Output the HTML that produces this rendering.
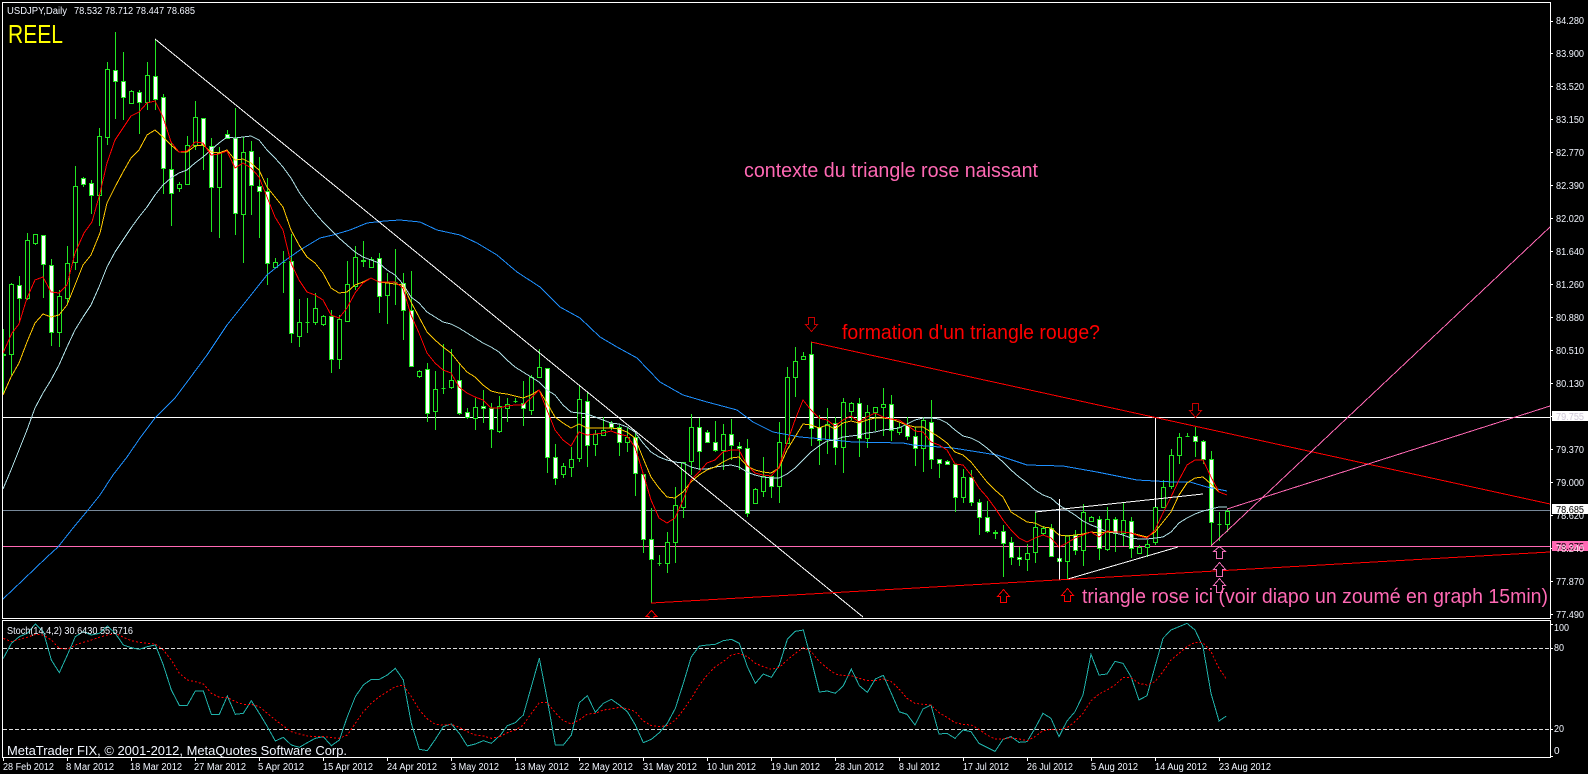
<!DOCTYPE html>
<html lang="fr">
<head>
<meta charset="utf-8">
<title>USDJPY,Daily</title>
<style>
html,body{margin:0;padding:0;background:#000;width:1588px;height:774px;overflow:hidden}
svg{display:block;position:absolute;left:0;top:0}
text{font-family:"Liberation Sans",sans-serif;fill:#f2f6ff;font-size:10px}
.big{font-size:20px}
</style>
</head>
<body>
<svg width="1588" height="774" viewBox="0 0 1588 774" xmlns="http://www.w3.org/2000/svg">
<defs>
<clipPath id="m"><rect x="3" y="3" width="1547" height="615"/></clipPath>
<clipPath id="s"><rect x="3" y="621" width="1547" height="136"/></clipPath>
</defs>
<rect width="1588" height="774" fill="#000"/>

<g shape-rendering="crispEdges" fill="none" stroke-width="1">
<!-- frame -->
<path stroke="#fff" d="M2.5 2.5H1550.5V618.5H2.5ZM2.5 620.5H1550.5V757.5H2.5Z"/>
<!-- axis ticks -->
<path stroke="#fff" d="M1551 21.5h2M1551 53.5h2M1551 86.5h2M1551 119.5h2M1551 152.5h2M1551 185.5h2M1551 218.5h2M1551 251.5h2M1551 284.5h2M1551 317.5h2M1551 350.5h2M1551 383.5h2M1551 416.5h2M1551 449.5h2M1551 482.5h2M1551 515.5h2M1551 548.5h2M1551 581.5h2M1551 614.5h2M1551 624.5h2M1551 648.5h2M1551 729.5h2M1551 756.5h2"/>
<path stroke="#fff" d="M3.5 757V761M67.5 757V761M131.5 757V761M195.5 757V761M259.5 757V761M323.5 757V761M387.5 757V761M451.5 757V761M515.5 757V761M579.5 757V761M643.5 757V761M707.5 757V761M771.5 757V761M835.5 757V761M899.5 757V761M963.5 757V761M1027.5 757V761M1091.5 757V761M1155.5 757V761M1219.5 757V761"/>

<g clip-path="url(#m)">
<!-- horizontal lines -->
<path stroke="#fff" d="M3 417.5H1552"/>
<path stroke="#778899" d="M3 510.5H1552"/>
<path stroke="#ff69b4" d="M3 546.5H1552"/>

<!-- wicks -->
<path stroke="#22e622" d="M3.5 329V393M11.5 283V375M19.5 276V323M27.5 233V300M35.5 234V245M43.5 235V298M51.5 259V346M59.5 290V347M67.5 246V303M75.5 166V270M83.5 177V187M91.5 180V214M99.5 128V226M107.5 62V145M115.5 32V119M123.5 52V120M131.5 90V103M139.5 90V134M147.5 62V110M155.5 39V110M163.5 94V194M171.5 143V226M179.5 182V192M187.5 136V184M195.5 101V150M203.5 118V170M211.5 138V232M219.5 147V238M227.5 130V138M235.5 108V235M243.5 137V263M251.5 141V215M259.5 157V238M267.5 178V285M275.5 258V268M283.5 251V293M291.5 234V343M299.5 299V347M307.5 298V333M315.5 293V325M323.5 315V326M331.5 310V373M339.5 315V369M347.5 261V321M355.5 246V290M363.5 241V267M371.5 257V268M379.5 253V313M387.5 273V324M395.5 249V305M403.5 273V340M411.5 271V367M419.5 370V378M427.5 363V422M435.5 371V430M443.5 344V394M451.5 349V389M459.5 363V415M467.5 408V419M475.5 398V430M483.5 390V423M491.5 403V448M499.5 396V433M507.5 398V422M515.5 398V403M523.5 381V426M531.5 375V415M539.5 349V378M547.5 368V473M555.5 444V485M563.5 463V478M571.5 447V477M579.5 386V462M587.5 392V467M595.5 430V456M603.5 417V435M611.5 421V430M619.5 425V456M627.5 428V452M635.5 433V496M643.5 474V553M651.5 508V603M659.5 555V566M667.5 532V573M675.5 487V563M683.5 462V518M691.5 414V475M699.5 418V470M707.5 430V443M715.5 421V452M723.5 424V470M731.5 419V460M739.5 442V470M747.5 439V517M755.5 488V503M763.5 457V497M771.5 476V498M779.5 422V503M787.5 367V443M795.5 347V397M803.5 352V360M811.5 342V446M819.5 415V465M827.5 408V454M835.5 417V465M843.5 398V473M851.5 402V420M859.5 398V457M867.5 405V448M875.5 407V431M883.5 388V436M891.5 395V441M899.5 423V435M907.5 417V440M915.5 427V466M923.5 417V472M931.5 400V469M939.5 459V478M947.5 460V465M955.5 464V512M963.5 469V503M971.5 470V506M979.5 499V535M987.5 501V533M995.5 530V539M1003.5 525V577M1011.5 537V565M1019.5 547V566M1027.5 544V571M1035.5 512V563M1043.5 526V535M1051.5 524V557M1059.5 553V561M1067.5 535V579M1075.5 530V555M1083.5 504V566M1091.5 516V522M1099.5 516V560M1107.5 507V551M1115.5 517V552M1123.5 502V546M1131.5 517V558M1139.5 545V554M1147.5 540V557M1155.5 505V545M1163.5 480V508M1171.5 449V489M1179.5 433V464M1187.5 433V437M1195.5 427V457M1203.5 440V464M1211.5 451V546M1219.5 512V541M1227.5 509V532"/>

<!-- black bodies -->
<path stroke="#22e622" fill="#000" d="M9.5 284.5h4V354.5h-4zM25.5 240.5h4V298.5h-4zM33.5 234.5h4V243.5h-4zM57.5 296.5h4V332.5h-4zM65.5 263.5h4V298.5h-4zM73.5 186.5h4V262.5h-4zM97.5 136.5h4V195.5h-4zM105.5 69.5h4V137.5h-4zM129.5 91.5h4V103.5h-4zM145.5 75.5h4V102.5h-4zM177.5 184.5h4V188.5h-4zM185.5 145.5h4V184.5h-4zM193.5 117.5h4V145.5h-4zM217.5 152.5h4V187.5h-4zM241.5 152.5h4V214.5h-4zM273.5 262.5h4V267.5h-4zM281.5 262.5h4V262.5h-4zM297.5 322.5h4V336.5h-4zM305.5 322.5h4V322.5h-4zM313.5 308.5h4V322.5h-4zM321.5 316.5h4V324.5h-4zM337.5 319.5h4V359.5h-4zM345.5 284.5h4V321.5h-4zM353.5 257.5h4V286.5h-4zM369.5 259.5h4V267.5h-4zM385.5 282.5h4V295.5h-4zM393.5 282.5h4V282.5h-4zM417.5 371.5h4V376.5h-4zM433.5 389.5h4V411.5h-4zM441.5 388.5h4V388.5h-4zM449.5 380.5h4V387.5h-4zM473.5 407.5h4V418.5h-4zM497.5 406.5h4V431.5h-4zM505.5 404.5h4V408.5h-4zM513.5 401.5h4V401.5h-4zM529.5 377.5h4V410.5h-4zM537.5 367.5h4V377.5h-4zM561.5 466.5h4V474.5h-4zM569.5 459.5h4V467.5h-4zM577.5 399.5h4V458.5h-4zM593.5 434.5h4V444.5h-4zM601.5 430.5h4V435.5h-4zM625.5 437.5h4V442.5h-4zM657.5 563.5h4V563.5h-4zM665.5 542.5h4V563.5h-4zM673.5 505.5h4V542.5h-4zM681.5 462.5h4V507.5h-4zM689.5 427.5h4V461.5h-4zM721.5 434.5h4V450.5h-4zM753.5 489.5h4V503.5h-4zM761.5 476.5h4V491.5h-4zM777.5 442.5h4V486.5h-4zM785.5 377.5h4V443.5h-4zM793.5 361.5h4V377.5h-4zM801.5 356.5h4V359.5h-4zM825.5 424.5h4V439.5h-4zM841.5 402.5h4V447.5h-4zM849.5 403.5h4V411.5h-4zM865.5 412.5h4V438.5h-4zM873.5 407.5h4V412.5h-4zM881.5 404.5h4V407.5h-4zM897.5 427.5h4V432.5h-4zM921.5 420.5h4V448.5h-4zM961.5 477.5h4V497.5h-4zM993.5 532.5h4V533.5h-4zM1025.5 553.5h4V559.5h-4zM1033.5 527.5h4V552.5h-4zM1041.5 528.5h4V533.5h-4zM1065.5 535.5h4V561.5h-4zM1081.5 512.5h4V550.5h-4zM1089.5 517.5h4V521.5h-4zM1105.5 519.5h4V549.5h-4zM1121.5 520.5h4V533.5h-4zM1137.5 547.5h4V553.5h-4zM1145.5 544.5h4V547.5h-4zM1153.5 507.5h4V542.5h-4zM1161.5 487.5h4V507.5h-4zM1169.5 455.5h4V486.5h-4zM1177.5 437.5h4V455.5h-4zM1185.5 436.5h4V436.5h-4zM1217.5 524.5h4V524.5h-4zM1225.5 511.5h4V524.5h-4z"/>

<!-- white bodies -->
<path stroke="#22e622" fill="#fff" d="M1.5 354.5h4V355.5h-4zM17.5 285.5h4V298.5h-4zM41.5 235.5h4V264.5h-4zM49.5 265.5h4V332.5h-4zM81.5 178.5h4V184.5h-4zM89.5 183.5h4V195.5h-4zM113.5 70.5h4V81.5h-4zM121.5 81.5h4V97.5h-4zM137.5 92.5h4V102.5h-4zM153.5 76.5h4V99.5h-4zM161.5 97.5h4V168.5h-4zM169.5 169.5h4V193.5h-4zM201.5 118.5h4V145.5h-4zM209.5 146.5h4V187.5h-4zM225.5 134.5h4V138.5h-4zM233.5 138.5h4V213.5h-4zM249.5 151.5h4V185.5h-4zM257.5 186.5h4V191.5h-4zM265.5 191.5h4V263.5h-4zM289.5 261.5h4V333.5h-4zM329.5 316.5h4V359.5h-4zM361.5 260.5h4V261.5h-4zM377.5 258.5h4V296.5h-4zM401.5 283.5h4V310.5h-4zM409.5 310.5h4V366.5h-4zM425.5 369.5h4V413.5h-4zM457.5 380.5h4V413.5h-4zM465.5 412.5h4V417.5h-4zM481.5 406.5h4V408.5h-4zM489.5 408.5h4V429.5h-4zM521.5 403.5h4V408.5h-4zM545.5 368.5h4V457.5h-4zM553.5 457.5h4V478.5h-4zM585.5 401.5h4V445.5h-4zM609.5 423.5h4V427.5h-4zM617.5 427.5h4V442.5h-4zM633.5 437.5h4V473.5h-4zM641.5 474.5h4V539.5h-4zM649.5 539.5h4V559.5h-4zM697.5 427.5h4V451.5h-4zM705.5 432.5h4V442.5h-4zM713.5 442.5h4V450.5h-4zM729.5 434.5h4V445.5h-4zM737.5 446.5h4V448.5h-4zM745.5 448.5h4V513.5h-4zM769.5 476.5h4V486.5h-4zM809.5 354.5h4V428.5h-4zM817.5 427.5h4V440.5h-4zM833.5 423.5h4V447.5h-4zM857.5 403.5h4V438.5h-4zM889.5 404.5h4V430.5h-4zM905.5 425.5h4V436.5h-4zM913.5 436.5h4V448.5h-4zM929.5 422.5h4V459.5h-4zM937.5 459.5h4V463.5h-4zM945.5 461.5h4V464.5h-4zM953.5 464.5h4V497.5h-4zM969.5 477.5h4V502.5h-4zM977.5 502.5h4V517.5h-4zM985.5 517.5h4V531.5h-4zM1001.5 531.5h4V543.5h-4zM1009.5 542.5h4V557.5h-4zM1017.5 557.5h4V559.5h-4zM1049.5 528.5h4V556.5h-4zM1057.5 558.5h4V561.5h-4zM1073.5 535.5h4V550.5h-4zM1097.5 519.5h4V548.5h-4zM1113.5 519.5h4V533.5h-4zM1129.5 521.5h4V548.5h-4zM1193.5 436.5h4V441.5h-4zM1201.5 441.5h4V459.5h-4zM1209.5 459.5h4V522.5h-4z"/>

<!-- moving averages -->
<polyline stroke="#1e90ff" points="3,599 23,580 47,557 58,547 73,528 88,510 100,495 113,475 127,457 140,438 155,418 175,398 190,378 207,355 227,325 247,300 267,275 283,262 300,250 320,238 333,235 350,230 367,223 385,221 400,220 420,222 437,230 460,235 477,243 497,255 517,272 540,287 560,307 580,318 600,337 617,347 637,358 660,382 683,395 707,402 737,410 753,422 773,432 800,437 823,439 853,442 903,443 913,445 953,448 997,455 1027,465 1063,466 1097,472 1137,480 1173,482 1190,482 1207,487 1227,491"/>
<polyline stroke="#b0e0e6" points="3,489 11,470 19,450 27,430 35,408 43,393 51,380 59,365 67,347 75,330 83,317 91,305 99,287 107,267 115,252 123,240 131,228 139,217 147,207 155,195 163,185 171,178 179,173 187,170 195,163 203,157 211,150 219,143 227,137 235,138 243,137 251,136 259,140 267,150 275,158 283,167 291,178 299,192 307,203 315,213 323,222 331,230 339,238 347,245 355,252 363,257 371,260 379,263 387,270 395,275 403,284 411,297 419,303 427,312 435,317 443,322 451,324 459,328 467,333 475,338 483,343 491,347 499,352 507,360 515,367 523,372 531,377 539,382 547,390 555,395 563,405 571,412 579,413 587,414 595,417 603,420 611,423 619,424 627,427 635,432 643,443 651,452 659,457 667,460 675,462 683,463 691,467 699,469 707,469 715,467 723,466 731,465 739,467 747,472 755,475 763,477 771,478 779,478 787,474 795,468 803,460 811,452 819,446 827,441 835,440 843,437 851,436 859,435 867,433 875,432 883,430 891,429 899,428 907,424 915,420 923,418 931,418 939,419 947,423 955,430 963,436 971,438 979,442 987,448 995,455 1003,462 1011,470 1019,477 1027,483 1035,490 1043,495 1051,498 1059,505 1067,510 1075,515 1083,521 1091,525 1099,528 1107,532 1115,533 1123,535 1131,538 1139,539 1147,539 1155,538 1163,537 1171,532 1179,523 1187,518 1195,514 1203,511 1211,509 1219,507 1227,507"/>
<polyline stroke="#ffc800" points="3,395 11,377 19,363 27,342 35,323 43,314 51,317 59,315 67,305 75,285 83,265 91,255 100,233 107,203 115,187 123,172 131,158 139,150 147,135 155,130 163,137 171,145 179,152 187,152 195,146 203,145 211,152 219,153 227,150 235,160 243,159 251,163 259,170 267,187 275,197 283,207 291,230 299,245 307,257 315,263 323,273 331,288 339,293 347,292 355,285 363,282 371,278 379,282 387,283 395,284 403,285 411,302 419,317 427,332 435,340 443,347 451,353 459,363 467,372 475,377 483,385 491,391 499,393 507,394 515,396 523,398 531,395 539,390 547,403 555,417 563,423 571,428 579,424 587,428 595,428 603,428 611,428 619,429 627,432 635,438 643,458 651,477 659,488 667,497 675,498 683,492 691,482 699,475 707,470 715,467 723,462 731,458 739,457 747,466 755,470 763,472 771,473 779,468 787,450 795,437 803,424 811,425 819,428 827,425 835,429 843,423 851,421 859,423 867,420 875,418 883,418 891,419 899,422 907,425 915,427 923,427 931,432 939,437 947,443 955,452 963,455 971,462 979,472 987,482 995,490 1003,497 1011,512 1019,517 1027,522 1035,523 1043,527 1051,528 1059,535 1067,536 1075,535 1083,534 1091,532 1099,533 1107,532 1115,532 1123,532 1131,533 1139,535 1147,537 1155,532 1163,522 1171,512 1179,495 1187,483 1195,478 1203,477 1211,484 1219,492 1227,495"/>
<polyline stroke="#ff0000" points="3,353 12,333 19,324 27,298 35,280 43,277 51,292 59,293 67,285 75,253 84,233 92,222 100,193 107,163 115,140 123,128 131,116 139,112 147,103 155,101 163,117 171,142 179,152 187,151 195,142 203,143 211,155 219,154 227,151 235,168 243,163 251,168 259,177 267,197 275,217 283,230 291,263 299,280 307,292 315,295 323,300 331,315 339,318 347,308 355,293 363,283 371,278 379,282 387,282 395,282 403,288 411,315 419,333 427,353 435,363 443,370 451,373 459,387 467,393 475,397 483,400 491,408 499,408 507,406 515,405 523,405 531,398 539,390 547,410 555,430 563,440 571,446 579,432 587,435 595,434 603,433 611,431 619,434 627,436 635,447 643,473 651,500 659,518 667,523 675,518 683,500 691,480 699,472 707,463 715,460 723,452 731,450 739,450 747,465 755,473 763,475 771,476 779,467 787,443 795,420 803,400 811,410 819,418 827,420 835,426 843,420 851,416 859,422 867,417 875,413 883,417 891,419 899,420 907,425 915,431 923,432 931,442 939,445 947,450 955,464 963,465 971,475 979,488 987,497 995,508 1003,520 1011,530 1019,538 1027,542 1035,538 1043,535 1051,538 1059,547 1067,543 1075,538 1083,535 1091,532 1099,537 1107,531 1115,532 1123,532 1131,533 1139,536 1147,538 1155,530 1163,513 1171,497 1179,480 1187,465 1195,460 1203,460 1211,477 1219,492 1227,495"/>

<!-- trend lines -->
<path stroke="#fff" d="M155 39L863 617"/>
<path stroke="#fff" d="M1035 512L1203 494M1068 579L1178 547M1059.5 499V580M1155.5 418V507"/>
<path stroke="#ff0000" d="M811 342L1550 504M651 603H652M651.5 603L1550 552"/>
<path stroke="#ff69b4" d="M1211 546L1550 227M1227 509L1550 406"/>

<!-- arrows -->
<g fill="#000">
<path stroke="#f00" d="M1003.5 589.5l6 7h-3v6h-6v-6h-3z"/>
<path stroke="#f00" d="M1067.5 588.5l6 7h-3v6h-6v-6h-3z"/>
<path stroke="#f00" d="M651.5 610.5l5.5 6h-3v6h-5v-6h-3z"/>
<path stroke="#c80000" d="M811.5 331.5l6-7h-3v-7h-6v7h-3z"/>
<path stroke="#c80000" d="M1195.5 417.5l6-7h-3v-7h-6v7h-3z"/>
<path stroke="#f070b8" d="M1219.5 546.5l6 5h-3v7h-6v-7h-3z"/>
<path stroke="#f070b8" d="M1219.5 562.5l6 7h-3v7h-6v-7h-3z"/>
<path stroke="#f070b8" d="M1219.5 578.5l6 7h-3v7h-6v-7h-3z"/>
</g>
</g>

<!-- stochastic -->
<path stroke="#ddd" stroke-dasharray="4 2" d="M3 648.5H1550M3 729.5H1550"/>
<g clip-path="url(#s)">
<g transform="translate(0,600) scale(.33333)">
<polyline vector-effect="non-scaling-stroke" stroke="#20b2aa" points="10,175 34,130 58,110 82,100 106,72 130,95 154,180 178,218 202,165 226,110 250,95 274,105 298,100 322,78 346,100 370,135 394,143 418,148 442,140 466,135 490,195 514,270 538,316 562,316 586,273 610,273 634,343 658,343 682,288 706,343 730,340 754,302 778,340 802,380 826,423 850,412 874,435 898,442 922,428 946,415 970,410 994,437 1018,420 1042,350 1066,290 1090,255 1114,238 1138,238 1162,225 1186,205 1210,240 1234,370 1258,448 1282,452 1306,418 1330,380 1354,372 1378,400 1402,438 1426,432 1450,422 1474,430 1498,408"/>
<polyline vector-effect="non-scaling-stroke" stroke="#ff0000" stroke-dasharray="2 2" points="10,115 34,125 58,118 82,112 106,103 130,105 154,120 178,145 202,148 226,135 250,127 274,120 298,112 322,105 346,100 370,112 394,122 418,127 442,130 466,132 490,150 514,180 538,220 562,240 586,245 610,252 634,280 658,292 682,292 706,305 730,313 754,313 778,320 802,340 826,360 850,378 874,395 898,402 922,408 946,410 970,410 994,413 1018,415 1042,405 1066,370 1090,335 1114,310 1138,290 1162,275 1186,260 1210,255 1234,290 1258,330 1282,357 1306,373 1330,375 1354,373 1378,382 1402,395 1426,405 1450,408 1474,415 1498,410"/>
</g>
<g transform="translate(500,610) scale(.33333)">
<polyline vector-effect="non-scaling-stroke" stroke="#20b2aa" points="-2,380 22,347 46,338 70,315 94,230 118,145 142,270 166,405 190,405 214,375 238,278 262,257 286,307 310,280 334,268 358,285 382,305 406,345 430,398 454,388 478,368 502,340 526,295 550,220 574,140 598,108 622,105 646,103 670,92 694,88 718,100 742,170 766,220 790,192 814,202 838,165 862,88 886,64 910,60 934,150 958,246 982,243 1006,250 1030,227 1054,177 1078,227 1102,247 1126,207 1150,196 1174,250 1198,305"/>
<polyline vector-effect="non-scaling-stroke" stroke="#ff0000" stroke-dasharray="2 2" points="-2,380 22,368 46,360 70,345 94,310 118,278 142,278 166,308 190,332 214,342 238,330 262,312 286,310 310,300 334,297 358,292 382,296 406,305 430,333 454,347 478,350 502,347 526,330 550,300 574,265 598,225 622,195 646,170 670,155 694,135 718,130 742,140 766,160 790,170 814,178 838,172 862,150 886,130 910,113 934,125 958,155 982,175 1006,192 1030,197 1054,197 1078,205 1102,212 1126,212 1150,207 1174,215 1198,237"/>
</g>
<g transform="translate(900,610) scale(.33333)">
<polyline vector-effect="non-scaling-stroke" stroke="#20b2aa" points="-3,305 21,313 45,345 69,297 93,285 117,372 141,370 165,385 189,360 213,365 237,400 261,412 285,424 309,388 333,380 357,397 381,395 405,355 429,310 453,325 477,380 501,333 525,305 549,255 573,133 597,195 621,192 645,154 669,160 693,200 717,270 741,257 765,170 789,85 813,60 837,50 861,40 885,60 909,110 933,250 957,333 979,318"/>
<polyline vector-effect="non-scaling-stroke" stroke="#ff0000" stroke-dasharray="2 2" points="-3,237 21,265 45,280 69,283 93,285 117,308 141,322 165,338 189,343 213,345 237,358 261,375 285,387 309,387 333,383 357,387 381,392 405,380 429,362 453,358 477,360 501,353 525,335 549,310 573,272 597,252 621,240 645,225 669,203 693,203 717,220 741,225 765,215 789,185 813,150 837,130 861,110 885,97 909,98 933,125 957,175 979,207"/>
</g>
</g>
</g>

<!-- header text -->
<text x="7" y="14" textLength="60" lengthAdjust="spacingAndGlyphs">USDJPY,Daily</text>
<text x="74" y="14" textLength="121" lengthAdjust="spacingAndGlyphs">78.532 78.712 78.447 78.685</text>
<text x="8" y="43" style="font-size:26px;fill:#ffff00" textLength="55" lengthAdjust="spacingAndGlyphs">REEL</text>
<text x="7" y="634" textLength="126" lengthAdjust="spacingAndGlyphs">Stoch(14,4,2) 30.6430 55.5716</text>
<text x="7" y="755" style="font-size:13px" textLength="340" lengthAdjust="spacingAndGlyphs">MetaTrader FIX, © 2001-2012, MetaQuotes Software Corp.</text>

<!-- annotations -->
<text class="big" x="744" y="177" style="fill:#ff69b4" textLength="294" lengthAdjust="spacingAndGlyphs">contexte du triangle rose naissant</text>
<text class="big" x="842" y="339" style="fill:#ff0000" textLength="258" lengthAdjust="spacingAndGlyphs">formation d'un triangle rouge?</text>
<text class="big" x="1082" y="603" style="fill:#ff69b4" textLength="466" lengthAdjust="spacingAndGlyphs">triangle rose ici (voir diapo un zoumé en graph 15min)</text>

<!-- price axis -->
<g>
<text x="1556" y="24" textLength="28" lengthAdjust="spacingAndGlyphs">84.280</text>
<text x="1556" y="57" textLength="28" lengthAdjust="spacingAndGlyphs">83.900</text>
<text x="1556" y="90" textLength="28" lengthAdjust="spacingAndGlyphs">83.520</text>
<text x="1556" y="123" textLength="28" lengthAdjust="spacingAndGlyphs">83.150</text>
<text x="1556" y="156" textLength="28" lengthAdjust="spacingAndGlyphs">82.770</text>
<text x="1556" y="189" textLength="28" lengthAdjust="spacingAndGlyphs">82.390</text>
<text x="1556" y="222" textLength="28" lengthAdjust="spacingAndGlyphs">82.020</text>
<text x="1556" y="255" textLength="28" lengthAdjust="spacingAndGlyphs">81.640</text>
<text x="1556" y="288" textLength="28" lengthAdjust="spacingAndGlyphs">81.260</text>
<text x="1556" y="321" textLength="28" lengthAdjust="spacingAndGlyphs">80.880</text>
<text x="1556" y="354" textLength="28" lengthAdjust="spacingAndGlyphs">80.510</text>
<text x="1556" y="387" textLength="28" lengthAdjust="spacingAndGlyphs">80.130</text>
<text x="1556" y="453" textLength="28" lengthAdjust="spacingAndGlyphs">79.370</text>
<text x="1556" y="486" textLength="28" lengthAdjust="spacingAndGlyphs">79.000</text>
<text x="1556" y="519" textLength="28" lengthAdjust="spacingAndGlyphs">78.620</text>
<text x="1556" y="585" textLength="28" lengthAdjust="spacingAndGlyphs">77.870</text>
<text x="1556" y="618" textLength="28" lengthAdjust="spacingAndGlyphs">77.490</text>

<rect x="1552" y="411" width="36" height="10" fill="#fff"/>
<text x="1556" y="420" style="fill:#cfc8d8" textLength="28" lengthAdjust="spacingAndGlyphs">79.755</text>
<rect x="1552" y="504" width="36" height="10" fill="#fff"/>
<text x="1556" y="513" style="fill:#000" textLength="28" lengthAdjust="spacingAndGlyphs">78.685</text>
<rect x="1552" y="541" width="36" height="10" fill="#ff69b4"/>
<text x="1556" y="550" style="fill:#000" textLength="28" lengthAdjust="spacingAndGlyphs">78.375</text>
<text x="1556" y="552" style="fill:#ffe0f0" textLength="28" lengthAdjust="spacingAndGlyphs">78.240</text>

<text x="1554" y="631" textLength="15" lengthAdjust="spacingAndGlyphs">100</text>
<text x="1554" y="651" textLength="10" lengthAdjust="spacingAndGlyphs">80</text>
<text x="1554" y="732" textLength="10" lengthAdjust="spacingAndGlyphs">20</text>
<text x="1554" y="754">0</text>
</g>

<!-- date axis -->
<g>
<text x="3" y="770" textLength="51" lengthAdjust="spacingAndGlyphs">28 Feb 2012</text>
<text x="66" y="770" textLength="48" lengthAdjust="spacingAndGlyphs">8 Mar 2012</text>
<text x="130" y="770" textLength="52" lengthAdjust="spacingAndGlyphs">18 Mar 2012</text>
<text x="194" y="770" textLength="52" lengthAdjust="spacingAndGlyphs">27 Mar 2012</text>
<text x="258" y="770" textLength="46" lengthAdjust="spacingAndGlyphs">5 Apr 2012</text>
<text x="323" y="770" textLength="50" lengthAdjust="spacingAndGlyphs">15 Apr 2012</text>
<text x="387" y="770" textLength="50" lengthAdjust="spacingAndGlyphs">24 Apr 2012</text>
<text x="451" y="770" textLength="48" lengthAdjust="spacingAndGlyphs">3 May 2012</text>
<text x="515" y="770" textLength="54" lengthAdjust="spacingAndGlyphs">13 May 2012</text>
<text x="579" y="770" textLength="54" lengthAdjust="spacingAndGlyphs">22 May 2012</text>
<text x="643" y="770" textLength="54" lengthAdjust="spacingAndGlyphs">31 May 2012</text>
<text x="707" y="770" textLength="49" lengthAdjust="spacingAndGlyphs">10 Jun 2012</text>
<text x="771" y="770" textLength="49" lengthAdjust="spacingAndGlyphs">19 Jun 2012</text>
<text x="835" y="770" textLength="49" lengthAdjust="spacingAndGlyphs">28 Jun 2012</text>
<text x="899" y="770" textLength="41" lengthAdjust="spacingAndGlyphs">8 Jul 2012</text>
<text x="963" y="770" textLength="46" lengthAdjust="spacingAndGlyphs">17 Jul 2012</text>
<text x="1027" y="770" textLength="46" lengthAdjust="spacingAndGlyphs">26 Jul 2012</text>
<text x="1091" y="770" textLength="47" lengthAdjust="spacingAndGlyphs">5 Aug 2012</text>
<text x="1155" y="770" textLength="52" lengthAdjust="spacingAndGlyphs">14 Aug 2012</text>
<text x="1219" y="770" textLength="52" lengthAdjust="spacingAndGlyphs">23 Aug 2012</text>
</g>
</svg>
</body>
</html>
